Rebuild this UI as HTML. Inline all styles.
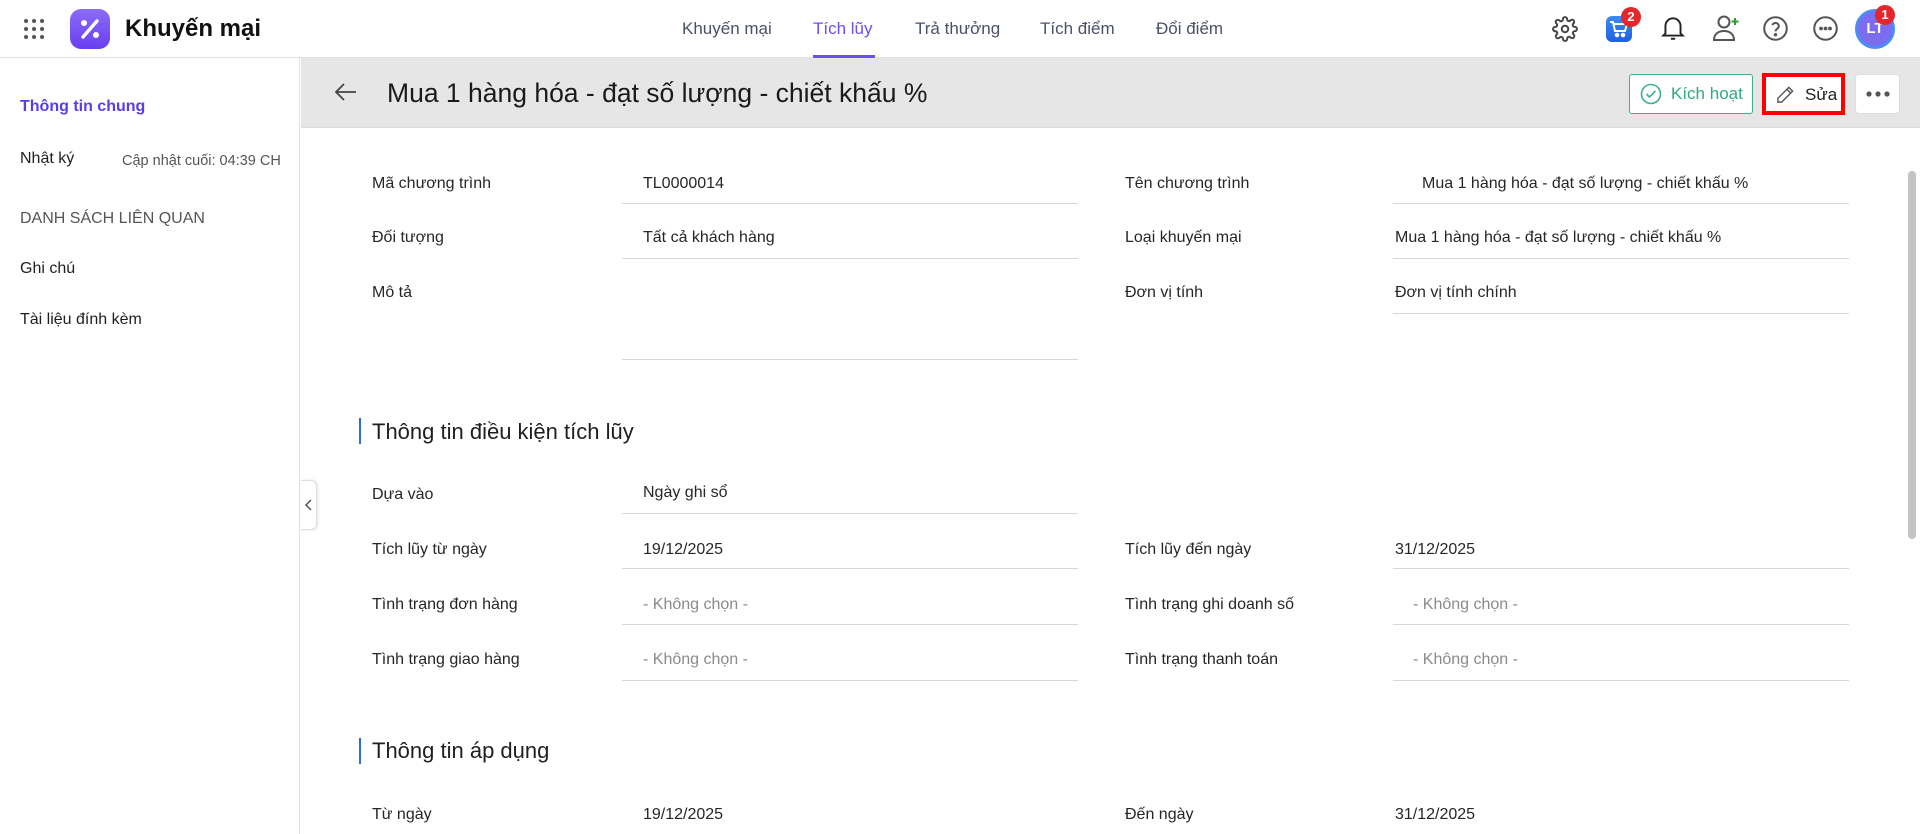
<!DOCTYPE html>
<html><head><meta charset="utf-8"><style>
*{box-sizing:border-box;margin:0;padding:0}
body{width:1920px;height:834px;overflow:hidden;background:#fff;font-family:"Liberation Sans","Noto Sans CJK SC",sans-serif;color:#1f1f1f;position:relative}
.a{position:absolute;white-space:nowrap}
.hdr{position:absolute;left:0;top:0;width:1920px;height:58px;border-bottom:1px solid #e0e0e0;background:#fff}
.nav{top:19px;font-size:17px;color:#4b5066}
.side{position:absolute;left:0;top:58px;width:300px;height:776px;border-right:1px solid #e0e0e0}
.bar{position:absolute;left:301px;top:58px;width:1619px;height:70px;background:#e6e6e6;border-bottom:1px solid #d8dbe2}
.lbl{font-size:16px;color:#262626}
.val{font-size:16px;color:#262626}
.ph{color:#8a8a8a}
.ul{position:absolute;height:1px;background:#d4d7de}
.sec{font-size:22px;color:#1f1f1f}
.secb{position:absolute;width:2px;height:26px;background:#2d6fd6}
.ic{position:absolute}
</style></head><body>
<div class="hdr"></div>
<svg class="ic" style="left:23px;top:18px" width="22" height="22" viewBox="0 0 22 22" fill="#555">
<circle cx="3" cy="3" r="2"/><circle cx="11" cy="3" r="2"/><circle cx="19" cy="3" r="2"/>
<circle cx="3" cy="11" r="2"/><circle cx="11" cy="11" r="2"/><circle cx="19" cy="11" r="2"/>
<circle cx="3" cy="19" r="2"/><circle cx="11" cy="19" r="2"/><circle cx="19" cy="19" r="2"/></svg>
<svg class="ic" style="left:70px;top:9px" width="40" height="40" viewBox="0 0 40 40">
<defs><linearGradient id="g" x1="0" y1="0" x2="0" y2="1"><stop offset="0" stop-color="#8b6cf8"/><stop offset="1" stop-color="#6a3ef0"/></linearGradient></defs>
<rect width="40" height="40" rx="11" fill="url(#g)"/>
<circle cx="14" cy="14" r="3" fill="#fff"/><circle cx="26" cy="26" r="3" fill="#fff"/>
<line x1="27" y1="12" x2="13" y2="28" stroke="#fff" stroke-width="3.4" stroke-linecap="round"/></svg>
<div class="a" style="left:125px;top:15px;font-size:24px;font-weight:bold;color:#111">Khuyến mại</div>
<div class="a nav" style="left:682px">Khuyến mại</div>
<div class="a nav" style="left:813px;color:#6a4ff7">Tích lũy</div>
<div class="ic" style="left:813px;top:55px;width:62px;height:3px;background:#6a4ff7"></div>
<div class="a nav" style="left:915px">Trả thưởng</div>
<div class="a nav" style="left:1040px">Tích điểm</div>
<div class="a nav" style="left:1156px">Đổi điểm</div>
<svg class="ic" style="left:1552px;top:16px" width="26" height="26" viewBox="0 0 24 24" fill="none" stroke="#444" stroke-width="1.8"><circle cx="12" cy="12" r="3"/><path d="M19.4 15a1.7 1.7 0 0 0 .3 1.8l.1.1a2 2 0 1 1-2.8 2.8l-.1-.1a1.7 1.7 0 0 0-1.8-.3 1.7 1.7 0 0 0-1 1.5V21a2 2 0 1 1-4 0v-.1a1.7 1.7 0 0 0-1.1-1.5 1.7 1.7 0 0 0-1.8.3l-.1.1a2 2 0 1 1-2.8-2.8l.1-.1a1.7 1.7 0 0 0 .3-1.8 1.7 1.7 0 0 0-1.5-1H3a2 2 0 1 1 0-4h.1a1.7 1.7 0 0 0 1.5-1.1 1.7 1.7 0 0 0-.3-1.8l-.1-.1a2 2 0 1 1 2.8-2.8l.1.1a1.7 1.7 0 0 0 1.800.3H9a1.7 1.7 0 0 0 1-1.5V3a2 2 0 1 1 4 0v.1a1.7 1.7 0 0 0 1 1.5 1.7 1.7 0 0 0 1.8-.3l.1-.1a2 2 0 1 1 2.8 2.8l-.1.1a1.7 1.7 0 0 0-.3 1.8V9a1.7 1.7 0 0 0 1.5 1H21a2 2 0 1 1 0 4h-.1a1.7 1.7 0 0 0-1.5 1z"/></svg>
<div class="ic" style="left:1606px;top:16px;width:26px;height:26px;border-radius:6px;background:linear-gradient(#3d8af7,#1f5fe0)"></div>
<svg class="ic" style="left:1609px;top:20px" width="20" height="18" viewBox="0 0 20 18" fill="none" stroke="#fff" stroke-width="2"><path d="M1 2h3l2 9h10l2-7H5"/><circle cx="8" cy="15" r="1.3" fill="#fff"/><circle cx="14" cy="15" r="1.3" fill="#fff"/></svg>
<div class="ic" style="left:1621px;top:7px;width:20px;height:20px;border-radius:10px;background:#e5262c;color:#fff;font-size:13px;font-weight:bold;text-align:center;line-height:20px">2</div>
<svg class="ic" style="left:1660px;top:14px" width="26" height="28" viewBox="0 0 24 26" fill="none" stroke="#222" stroke-width="1.8"><path d="M5 18V11a7 7 0 0 1 14 0v7l2 2H3z"/><path d="M10 23h4"/></svg>
<svg class="ic" style="left:1712px;top:13px" width="30" height="30" viewBox="0 0 30 30" fill="none" stroke="#555" stroke-width="2"><circle cx="12" cy="9" r="5.5"/><path d="M2 27c0-6 4.5-9 10-9s10 3 10 9z"/><path d="M23 5v7M19.5 8.5h7" stroke="#2ca02c"/></svg>
<svg class="ic" style="left:1762px;top:15px" width="27" height="27" viewBox="0 0 24 24" fill="none" stroke="#555" stroke-width="1.8"><circle cx="12" cy="12" r="10"/><path d="M9.2 9a3 3 0 0 1 5.8 1c0 2-3 2.5-3 4.5"/><circle cx="12" cy="17.5" r=".6" fill="#555"/></svg>
<svg class="ic" style="left:1812px;top:15px" width="27" height="27" viewBox="0 0 24 24" fill="none" stroke="#555" stroke-width="1.8"><circle cx="12" cy="12" r="10"/><circle cx="8" cy="12" r=".8" fill="#555"/><circle cx="12" cy="12" r=".8" fill="#555"/><circle cx="16" cy="12" r=".8" fill="#555"/></svg>
<div class="ic" style="left:1855px;top:9px;width:40px;height:40px;border-radius:20px;background:#7b6cf0;border:3px solid #4a8df5;color:#fff;font-weight:bold;font-size:15px;text-align:center;line-height:34px">LT</div>
<div class="ic" style="left:1875px;top:5px;width:20px;height:20px;border-radius:10px;background:#e5262c;color:#fff;font-size:13px;font-weight:bold;text-align:center;line-height:20px">1</div>

<div class="side"></div>
<div class="a" style="left:20px;top:98px;font-size:16px;font-weight:bold;color:#5b3bf0">Thông tin chung</div>
<div class="a" style="left:20px;top:150px;font-size:16px">Nhật ký</div>
<div class="a" style="left:122px;top:153px;font-size:14.5px;color:#555">Cập nhật cuối: 04:39 CH</div>
<div class="a" style="left:20px;top:210px;font-size:16px;color:#555">DANH SÁCH LIÊN QUAN</div>
<div class="a" style="left:20px;top:260px;font-size:16px">Ghi chú</div>
<div class="a" style="left:20px;top:311px;font-size:16px">Tài liệu đính kèm</div>
<div class="ic" style="left:301px;top:480px;width:16px;height:50px;background:#fff;border:1px solid #ddd;border-left:none;border-radius:0 6px 6px 0;box-shadow:1px 0 3px rgba(0,0,0,.1)"></div>
<svg class="ic" style="left:304px;top:498px" width="10" height="14" viewBox="0 0 10 14" fill="none" stroke="#555" stroke-width="1.5"><path d="M7 2L2 7l5 5"/></svg>

<div class="bar"></div>
<svg class="ic" style="left:334px;top:81px" width="24" height="22" viewBox="0 0 24 22" fill="none" stroke="#444" stroke-width="1.8"><path d="M22 11H3M10 3l-8 8 8 8"/></svg>
<div class="a" style="left:387px;top:78px;font-size:26.5px;color:#1a1a1a">Mua 1 hàng hóa - đạt số lượng - chiết khấu %</div>
<div class="ic" style="left:1629px;top:74px;width:124px;height:40px;border:1px solid #3ab28f;border-radius:3px;background:#fff"></div>
<svg class="ic" style="left:1640px;top:83px" width="22" height="22" viewBox="0 0 22 22" fill="none" stroke="#3ab28f" stroke-width="1.6"><circle cx="11" cy="11" r="9.5"/><path d="M6.5 11l3 3 6-6"/></svg>
<div class="a" style="left:1671px;top:84px;font-size:17px;color:#2fa983">Kích hoạt</div>
<div class="ic" style="left:1762px;top:73px;width:83px;height:42px;border:4px solid #f00;background:#fff"></div>
<svg class="ic" style="left:1776px;top:85px" width="19" height="19" viewBox="0 0 20 20" fill="none" stroke="#555" stroke-width="1.5"><path d="M13.5 2.5l4 4L6 18H2v-4z"/><path d="M11.5 4.5l4 4"/></svg>
<div class="a" style="left:1805px;top:85px;font-size:17px;color:#222">Sửa</div>
<div class="ic" style="left:1855px;top:74px;width:45px;height:40px;border:1px solid #ddd;border-radius:4px;background:#fff"></div>
<svg class="ic" style="left:1866px;top:91px" width="24" height="6" viewBox="0 0 24 6" fill="#555"><circle cx="3" cy="3" r="2.6"/><circle cx="12" cy="3" r="2.6"/><circle cx="21" cy="3" r="2.6"/></svg>

<div class="ic" style="left:1908px;top:171px;width:8px;height:368px;border-radius:4px;background:#c4c4c4"></div>

<div class="a lbl" style="left:372px;top:175px">Mã chương trình</div>
<div class="a val" style="left:643px;top:175px">TL0000014</div>
<div class="ul" style="left:622px;top:203px;width:456px"></div>
<div class="a lbl" style="left:1125px;top:175px">Tên chương trình</div>
<div class="a val" style="left:1422px;top:175px">Mua 1 hàng hóa - đạt số lượng - chiết khấu %</div>
<div class="ul" style="left:1393px;top:203px;width:456px"></div>

<div class="a lbl" style="left:372px;top:229px">Đối tượng</div>
<div class="a val" style="left:643px;top:229px">Tất cả khách hàng</div>
<div class="ul" style="left:622px;top:258px;width:456px"></div>
<div class="a lbl" style="left:1125px;top:229px">Loại khuyến mại</div>
<div class="a val" style="left:1395px;top:229px">Mua 1 hàng hóa - đạt số lượng - chiết khấu %</div>
<div class="ul" style="left:1393px;top:258px;width:456px"></div>

<div class="a lbl" style="left:372px;top:284px">Mô tả</div>
<div class="ul" style="left:622px;top:359px;width:456px"></div>
<div class="a lbl" style="left:1125px;top:284px">Đơn vị tính</div>
<div class="a val" style="left:1395px;top:284px">Đơn vị tính chính</div>
<div class="ul" style="left:1393px;top:313px;width:456px"></div>

<div class="secb" style="left:359px;top:418px"></div>
<div class="a sec" style="left:372px;top:419px">Thông tin điều kiện tích lũy</div>

<div class="a lbl" style="left:372px;top:486px">Dựa vào</div>
<div class="a val" style="left:643px;top:484px">Ngày ghi sổ</div>
<div class="ul" style="left:622px;top:513px;width:456px"></div>

<div class="a lbl" style="left:372px;top:541px">Tích lũy từ ngày</div>
<div class="a val" style="left:643px;top:541px">19/12/2025</div>
<div class="ul" style="left:622px;top:568px;width:456px"></div>
<div class="a lbl" style="left:1125px;top:541px">Tích lũy đến ngày</div>
<div class="a val" style="left:1395px;top:541px">31/12/2025</div>
<div class="ul" style="left:1393px;top:568px;width:456px"></div>

<div class="a lbl" style="left:372px;top:596px">Tình trạng đơn hàng</div>
<div class="a val ph" style="left:643px;top:596px">- Không chọn -</div>
<div class="ul" style="left:622px;top:624px;width:456px"></div>
<div class="a lbl" style="left:1125px;top:596px">Tình trạng ghi doanh số</div>
<div class="a val ph" style="left:1413px;top:596px">- Không chọn -</div>
<div class="ul" style="left:1393px;top:624px;width:456px"></div>

<div class="a lbl" style="left:372px;top:651px">Tình trạng giao hàng</div>
<div class="a val ph" style="left:643px;top:651px">- Không chọn -</div>
<div class="ul" style="left:622px;top:680px;width:456px"></div>
<div class="a lbl" style="left:1125px;top:651px">Tình trạng thanh toán</div>
<div class="a val ph" style="left:1413px;top:651px">- Không chọn -</div>
<div class="ul" style="left:1393px;top:680px;width:456px"></div>

<div class="secb" style="left:359px;top:738px"></div>
<div class="a sec" style="left:372px;top:738px">Thông tin áp dụng</div>
<div class="a lbl" style="left:372px;top:806px">Từ ngày</div>
<div class="a val" style="left:643px;top:806px">19/12/2025</div>
<div class="a lbl" style="left:1125px;top:806px">Đến ngày</div>
<div class="a val" style="left:1395px;top:806px">31/12/2025</div>
</body></html>
